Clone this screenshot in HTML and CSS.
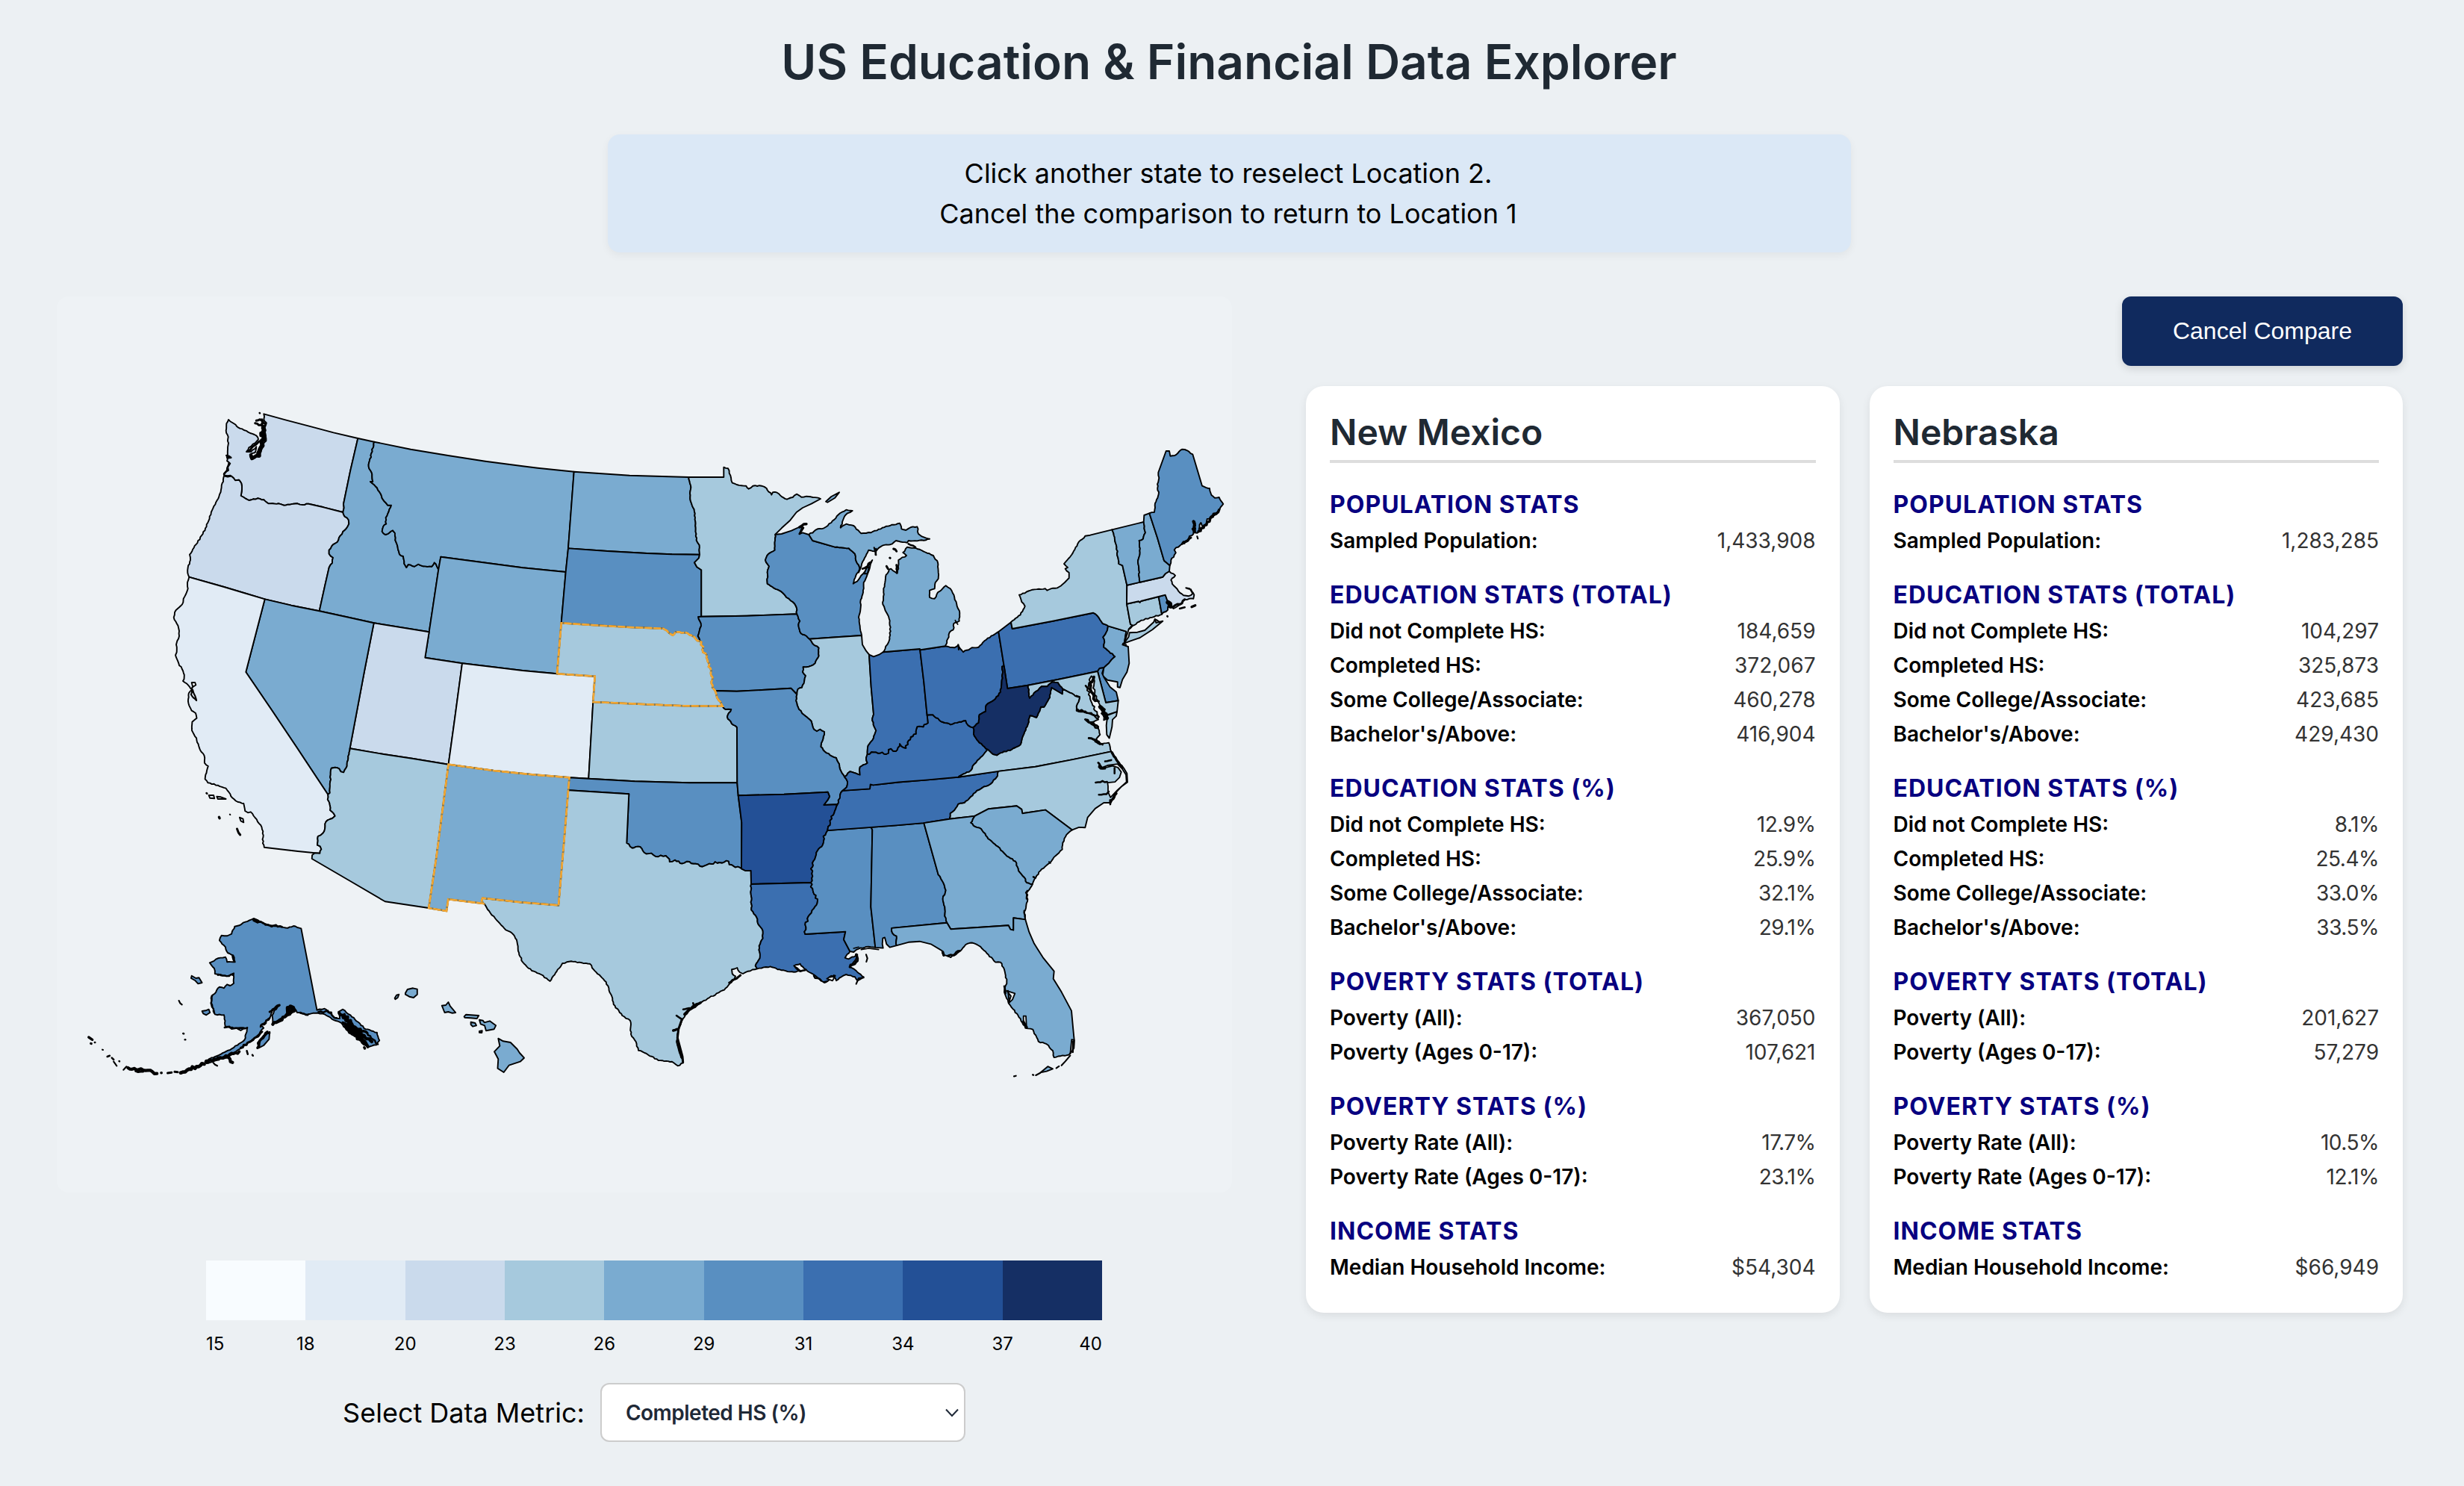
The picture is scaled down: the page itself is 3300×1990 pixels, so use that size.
FILE: index.html
```html
<!DOCTYPE html>
<html lang="en">
<head>
<meta charset="utf-8">
<title>US Education &amp; Financial Data Explorer</title>
<link rel="stylesheet" href="styles.css">
</head>
<body>
<main class="page">
  <h1 class="title">US Education &amp; Financial Data Explorer</h1>
  <div class="banner">
    <p>Click another state to reselect Location 2.</p>
    <p>Cancel the comparison to return to Location 1</p>
  </div>
  <div class="columns">
    <section class="explorer">
      <svg class="map" id="map" viewBox="76 397 1574 1200" role="img" aria-label="US states map"></svg>
      <div class="legend">
        <div class="swatches">
          <span class="c1"></span><span class="c2"></span><span class="c3"></span><span class="c4"></span><span class="c5"></span><span class="c6"></span><span class="c7"></span><span class="c8"></span><span class="c9"></span>
        </div>
        <div class="ticks">
          <span class="edge">15</span><span>18</span><span>20</span><span>23</span><span>26</span><span>29</span><span>31</span><span>34</span><span>37</span><span class="edge">40</span>
        </div>
      </div>
      <div class="metric">
        <span class="metric-label">Select Data Metric:</span>
        <div class="select">
          <span>Completed HS (%)</span>
          <svg class="chevron" width="20" height="12" viewBox="0 0 20 12"><path d="M2 1.5 L10 10 L18 1.5"/></svg>
        </div>
      </div>
    </section>
    <section class="compare">
      <button class="cancel" type="button">Cancel Compare</button>
      <div class="cards">
        <article class="card">
          <h2>New Mexico</h2>
          <h3>Population Stats</h3>
          <div class="row"><b>Sampled Population:</b><span>1,433,908</span></div>
          <h3>Education Stats (Total)</h3>
          <div class="row"><b>Did not Complete HS:</b><span>184,659</span></div>
          <div class="row"><b>Completed HS:</b><span>372,067</span></div>
          <div class="row"><b>Some College/Associate:</b><span>460,278</span></div>
          <div class="row"><b>Bachelor's/Above:</b><span>416,904</span></div>
          <h3>Education Stats (%)</h3>
          <div class="row pct"><b>Did not Complete HS:</b><span>12.9%</span></div>
          <div class="row pct"><b>Completed HS:</b><span>25.9%</span></div>
          <div class="row pct"><b>Some College/Associate:</b><span>32.1%</span></div>
          <div class="row pct"><b>Bachelor's/Above:</b><span>29.1%</span></div>
          <h3>Poverty Stats (Total)</h3>
          <div class="row"><b>Poverty (All):</b><span>367,050</span></div>
          <div class="row"><b>Poverty (Ages 0-17):</b><span>107,621</span></div>
          <h3>Poverty Stats (%)</h3>
          <div class="row pct"><b>Poverty Rate (All):</b><span>17.7%</span></div>
          <div class="row pct"><b>Poverty Rate (Ages 0-17):</b><span>23.1%</span></div>
          <h3>Income Stats</h3>
          <div class="row"><b>Median Household Income:</b><span>$54,304</span></div>
        </article>
        <article class="card">
          <h2>Nebraska</h2>
          <h3>Population Stats</h3>
          <div class="row"><b>Sampled Population:</b><span>1,283,285</span></div>
          <h3>Education Stats (Total)</h3>
          <div class="row"><b>Did not Complete HS:</b><span>104,297</span></div>
          <div class="row"><b>Completed HS:</b><span>325,873</span></div>
          <div class="row"><b>Some College/Associate:</b><span>423,685</span></div>
          <div class="row"><b>Bachelor's/Above:</b><span>429,430</span></div>
          <h3>Education Stats (%)</h3>
          <div class="row pct"><b>Did not Complete HS:</b><span>8.1%</span></div>
          <div class="row pct"><b>Completed HS:</b><span>25.4%</span></div>
          <div class="row pct"><b>Some College/Associate:</b><span>33.0%</span></div>
          <div class="row pct"><b>Bachelor's/Above:</b><span>33.5%</span></div>
          <h3>Poverty Stats (Total)</h3>
          <div class="row"><b>Poverty (All):</b><span>201,627</span></div>
          <div class="row"><b>Poverty (Ages 0-17):</b><span>57,279</span></div>
          <h3>Poverty Stats (%)</h3>
          <div class="row pct"><b>Poverty Rate (All):</b><span>10.5%</span></div>
          <div class="row pct"><b>Poverty Rate (Ages 0-17):</b><span>12.1%</span></div>
          <h3>Income Stats</h3>
          <div class="row"><b>Median Household Income:</b><span>$66,949</span></div>
        </article>
      </div>
    </section>
  </div>
</main>
<script src="map.js"></script>
</body>
</html>
```

FILE: styles.css
```css
* { box-sizing: border-box; margin: 0; padding: 0; }

body {
  background: #ecf0f3;
  color: #000;
  font-family: Inter, "Liberation Sans", sans-serif;
}

.page {
  width: 3300px;
  height: 1990px;
  padding: 44px 84px 0 76px;
  display: flex;
  flex-direction: column;
  align-items: center;
  overflow: hidden;
}

.title {
  font-size: 64px;
  font-weight: 600;
  line-height: 78px;
  color: #1f2933;
}

.banner {
  width: 1665px;
  height: 158px;
  margin-top: 58px;
  padding: 25px 26px 25px 24px;
  border-radius: 16px;
  background: #dbe8f6;
  box-shadow: 0 4px 12px rgba(0, 0, 0, 0.05);
  text-align: center;
  font-size: 36px;
  line-height: 54px;
}

.columns {
  width: 3142px;
  align-self: flex-start;
  margin-top: 59px;
  display: flex;
  justify-content: space-between;
}

.explorer {
  width: 1600px;
  display: flex;
  flex-direction: column;
  align-items: center;
}

.map {
  width: 1574px;
  height: 1200px;
  align-self: flex-start;
  background: #eef2f5;
  border-radius: 16px;
}

.state { stroke: #000; stroke-width: 1.9; stroke-linejoin: round; }
.picked-base { fill: none; stroke: #94804f; stroke-width: 2.6; }
.picked { fill: none; stroke: #f3a733; stroke-width: 2.6; stroke-dasharray: 10 2; }
.ink { fill: none; stroke: #000; stroke-linejoin: round; stroke-linecap: round; }
.water { fill: #eef2f5; stroke: #000; stroke-width: 1.8; stroke-linejoin: round; }

.c1 { background: #f8fcff; fill: #f8fcff; }
.c2 { background: #e1ebf5; fill: #e1ebf5; }
.c3 { background: #cadaec; fill: #cadaec; }
.c4 { background: #a6c9dd; fill: #a6c9dd; }
.c5 { background: #7aabd0; fill: #7aabd0; }
.c6 { background: #598fc1; fill: #598fc1; }
.c7 { background: #3b6fb0; fill: #3b6fb0; }
.c8 { background: #235096; fill: #235096; }
.c9 { background: #152f64; fill: #152f64; }

.legend { width: 1200px; margin-top: 91px; }

.swatches { display: flex; height: 80px; }
.swatches span { flex: 1; }

.ticks {
  display: flex;
  margin-top: 17px;
  font-size: 24px;
  line-height: 30px;
}
.ticks span { flex: 2 1 0; text-align: center; }
.ticks .edge { flex: 1 1 0; text-align: left; }
.ticks .edge:last-child { text-align: right; }

.metric {
  display: flex;
  align-items: center;
  gap: 21px;
  margin-top: 37px;
}

.metric-label { font-size: 36px; line-height: 44px; }

.select {
  width: 489px;
  height: 79px;
  padding: 0 6px 0 32px;
  display: flex;
  align-items: center;
  justify-content: space-between;
  border: 2px solid #ccc;
  border-radius: 12px;
  background: #fff;
  color: #1f2937;
  font-size: 28px;
  font-weight: 600;
  letter-spacing: -0.5px;
}

.chevron path { fill: none; stroke: #1f2937; stroke-width: 2; }

.compare {
  width: 1469px;
  display: flex;
  flex-direction: column;
  align-items: flex-end;
  gap: 27px;
}

.cancel {
  width: 376px;
  height: 93px;
  border: 0;
  border-radius: 12px;
  background: #102a5e;
  color: #fff;
  font: 32px "Liberation Sans", Arial, sans-serif;
  box-shadow: 0 4px 12px rgba(0, 0, 0, 0.12);
}

.cards { width: 100%; display: flex; gap: 40px; }

.card {
  flex: 1;
  height: 1241px;
  padding: 33px 32px 32px;
  border-radius: 24px;
  background: #fff;
  box-shadow: 0 4px 12px rgba(0, 0, 0, 0.08);
}

.card h2 {
  padding-bottom: 8px;
  margin-bottom: 36px;
  border-bottom: 4px solid #ddd;
  font-size: 48px;
  font-weight: 600;
  line-height: 58px;
  color: #1f2933;
}

.card h3 {
  margin: 30px 0 5px;
  font-size: 32px;
  font-weight: 700;
  line-height: 40px;
  letter-spacing: 1px;
  text-transform: uppercase;
  color: #080080;
}

.card h2 + h3 { margin-top: 0; }

.row {
  display: flex;
  justify-content: space-between;
  font-size: 28px;
  line-height: 46px;
}
.row b { font-weight: 600; }
.row span { color: #333; }
.pct span { letter-spacing: -0.5px; }
```

FILE: map.js
```js
// Quantised map tiles: origin x, origin y, x scale, y scale.
const T = 1 / 3;
const tiles = {
  A: [200, 530, T, T], B: [700, 600, T, T], C: [1150, 580, T, T],
  D: [200, 900, 600 / 1568, T], E: [750, 950, T, T],
  F: [1100, 900, T, 560 / 1568], G: [100, 1200, 640 / 1568, T]
};

// Shared borders. A leading "~" marks a natural (irregular) line, "~~" a strongly winding one.
const arcs = {
  waN: "A 460,73 550,98 650,124 740,148 838,171",
  waCoast: "~A 460,73 460,95 470,108 462,130 468,160 465,185 455,200 445,240 430,245 415,255 405,245 410,232 425,228 430,205 408,225 390,225 400,208 425,190 438,175 430,160 405,150 380,138 358,128 340,112 318,96 310,112 308,140 317,165 315,215 312,262 325,272 315,285 318,300 300,312 301,320",
  orN: "~A 301,320 330,323 345,340 360,338 370,352 372,375 368,402 385,412 400,420 435,412 460,418 478,433 520,433 540,440 595,433 615,438 640,434 | A 700,448 778,468",
  waID: "A 838,171 808,300 780,435 782,450 778,468",
  idN: "A 838,171 903,185",
  orID: "~A 778,468 785,485 800,498 802,515 785,540 762,570 755,588 738,598 722,620 722,635 738,650 735,672 722,690 | A 705,765 683,865",
  orCoast: "~A 301,320 297,345 290,360 288,378 272,420 252,460 235,510 215,555 188,597 162,638 165,660 155,690 154,712 160,728",
  orCA: "A 160,728 300,768 380,792 464,817",
  orNV: "A 464,817 570,842 683,865",
  idNV: "A 683,865 790,888 902,913",
  idUT: "A 902,913 1124,949",
  mtID: "~A 903,185 881,285 895,315 898,345 888,345 915,370 930,395 935,412 950,430 958,440 972,440 962,465 950,490 952,515 940,525 935,545 948,558 965,550 978,541 987,552 988,580 996,600 1002,625 1005,637 1020,645 1024,675 1033,690 1040,678 1065,686 1080,677 1100,685 1135,686 1145,670 1155,685 1162,698",
  mtN: "A 903,185 1050,215 1200,240 1350,263 1500,283 | B 60,80 206,95",
  mtWYw: "A 1162,698 1171,647",
  idWY: "A 1162,698 1124,949",
  mtWYs: "A 1171,647 1330,668 1500,691 | B 90,490 173,498",
  mtND: "B 206,95 183,403",
  mtSD: "B 183,403 173,498",
  wySD: "B 173,498 155,703",
  wyNE: "B 155,703 138,907",
  wyUT: "A 1124,949 1108,1052 1257,1075",
  wyCO: "A 1257,1075 1370,1088 1500,1104 | B 138,907",
  utCO: "A 1257,1075 | D 1070,180 1047,371",
  caNV: "A 464,817 388,1110 | D 430,155 520,310 625,492",
  nvUT: "A 902,913 | D 752,0 702,307",
  nvAZ: "~D 702,307 689,385 680,403 670,400 664,388 650,383 637,386 633,440 632,485 625,492",
  utAZ: "D 702,307 820,330 920,347 1047,371",
  caAZ: "~D 625,492 624,512 632,535 633,555 650,578 640,588 624,595 615,610 612,640 600,655 590,660 588,695 598,700 602,712 597,728 | D 580,727",
  caS: "D 580,727 520,720 402,704",
  caCoast: "~A 160,728 153,750 155,775 148,795 137,815 136,830 120,850 102,870 98,890 110,915 118,935 120,965 112,985 108,1000 110,1030 105,1042 118,1075 135,1105 140,1130 135,1146 | ~D 140,58 150,70 138,85 137,125 148,155 162,165 166,185 150,200 149,235 165,265 175,305 192,335 193,365 206,378 200,405 195,430 205,445 240,455 268,467 283,490 290,505 310,522 330,528 335,558 345,565 355,562 370,585 390,615 398,640 397,688 402,704",
  azS: "D 580,727 570,735 569,750 700,838 825,922 978,948",
  azNM: "D 1047,371 1030,520 1005,740 978,948",
  coNM: "D 1047,371 1205,396 1340,412 1470,424",
  nmOK: "D 1470,424 1466,476",
  nmTX: "D 1466,476 1450,700 1432,937 1300,925 1166,908 1163,918 1169,930",
  nmS: "D 978,948 1040,960 1046,913 1169,930",
  coOK: "D 1470,424 | E 115,278",
  coKS: "B 283,1020 | E 131,0 115,278",
  coNE: "B 138,907 290,917 283,1020",
  neSD: "B 155,703 290,712 430,720 565,725 | ~B 585,740 603,752 613,740 655,741 670,750 690,760 702,774 718,780",
  ndSD: "B 183,403 340,414 500,423 600,427 711,428",
  ndMN: "~B 667,117 675,150 673,205 690,255 695,320 698,370 710,390 711,428",
  ndN: "B 206,95 430,110 667,117",
  mnN: "B 667,117 808,117 808,77 | ~B 825,82 835,110 842,140 860,147 898,152 908,164 925,152 960,152 980,162 1000,188 1005,178 1022,179 1035,190 1062,206 1085,198 1102,185 1120,197 1150,195 1197,204",
  mnLake: "B 1197,204 1160,224 1125,240 1100,258 1075,290 1040,322 1015,347",
  mnWI: "~B 1015,347 1013,410 988,425 975,450 990,475 983,500 983,545 1010,563 1045,582 1060,600 1085,618 1098,635 1102,667",
  mnIA: "B 718,677 900,674 1102,667",
  mnSD: "B 711,428 708,442 690,460 700,478 718,490 718,677",
  sdIA: "~B 718,677 706,678 712,695 717,715 710,735 704,755 718,780",
  neIA: "~~B 718,780 722,810 735,825 742,850 747,878 757,895 762,930 762,962 773,975",
  neMO: "~B 773,975 780,1000 795,1020 803,1037",
  neKS: "B 283,1020 500,1030 650,1036 803,1037",
  iaMO: "B 773,975 860,977 1000,970 1078,965 1102,990",
  iaWI: "~B 1102,667 1114,695 1108,710 1118,745 1140,755 1153,767",
  iaIL: "~B 1153,767 1165,785 1190,803 1190,835 1175,865 1150,878 1127,880 1125,900 1137,915 1130,945 1122,962 1106,968 1102,990",
  wiIL: "B 1153,767 1260,760 1362,753",
  wiMI: "B 1150,348 1165,372 1255,398 | ~B 1310,403 1335,425 1340,455 1350,470 1355,488",
  wiSup: "B 1015,347 1040,345 1080,332 1110,318 1125,312 1112,345 1125,340 1150,348",
  wiLake: "~B 1355,488 1342,505 1328,545 1345,535 1360,512 1372,500 1385,480 1405,450 1388,500 1370,540 1368,580 1358,610 1358,640 1350,680 1355,715 1362,753",
  ilLake: "B 1362,753 1365,790 1380,815 1392,830",
  inLake: "B 1392,830 1410,838 1432,830 | C 98,880",
  miIN: "C 98,880 246,867",
  miOH: "C 246,867 249,871 347,856",
  inOH: "C 246,867 262,1000 275,1135 | F 425,161",
  miLow: "~C 98,880 122,835 128,780 122,745 97,688 100,640 108,578 122,548 130,545 150,560 160,545 160,510 192,492 178,480 195,458 230,462 275,482 300,492 318,520 320,585 308,600 305,625 285,632 285,660 305,665 318,640 350,613 368,625 385,660 395,695 405,715 404,755 382,765 380,790 365,800 362,820 347,856",
  miUp: "~B 1150,348 1185,325 1210,322 1240,300 1275,262 1300,248 1325,252 1305,262 1290,282 1277,320 1300,305 1330,312 1360,343 | ~C 20,402 50,400 95,380 165,362 172,385 190,390 210,378 235,376 240,405 262,418 285,425 270,430 200,432 195,440 150,432 135,445 95,452 65,475 40,470 20,510 0,560 | B 1355,488",
  ilIN: "B 1392,830 1400,960 1410,1070 | ~B 1405,1095 1420,1135 1410,1165 1388,1195 | ~E 1238,145 1235,180",
  inKY: "~~E 1235,180 1270,172 1310,180 1330,158 1350,168 1365,138 1390,155 1400,125 1430,98 1435,70 1460,70 1478,55 | F 425,161",
  ohKY: "~F 425,161 448,160 480,185 520,197 545,190 580,182 590,200 610,208",
  ohWV: "~F 610,208 632,190 635,160 660,148 662,125 700,100 720,75 725,30 | ~C 580,960 576,938 584,936",
  ohPA: "C 562,798 584,936",
  paWV: "C 584,936 598,1026 680,1013",
  paMD: "C 680,1013 800,990 960,957",
  paDE: "C 960,957 968,945 985,943",
  paNJ: "~C 985,943 1005,925 1030,898 1000,872 985,860 988,840 982,820 995,800 1002,775",
  paNY: "C 617,786 780,755 942,722 | ~C 960,735 970,750 980,765 1002,775",
  paLake: "C 562,798 612,760",
  paNYw: "C 612,760 617,786",
  ohLake: "~C 347,856 385,862 400,852 420,880 455,862 482,860 505,835 562,798",
  nyLake: "~C 612,760 650,730 668,695 655,678 645,650 690,632 750,625 757,632 805,618 845,583 845,560 830,545 840,540 825,525 855,490 880,445 910,413",
  nyCan: "C 910,413 930,410 1018,388",
  nyVT: "~C 1018,388 1035,450 1045,525 | C 1060,532 1078,611",
  nyMA: "C 1078,611 1077,686",
  nyCT: "C 1077,686 1092,768 1100,772 1085,788",
  nyNJ: "C 1002,775 1075,797 1068,840",
  nyCoast: "C 1085,788 1080,805 1068,840",
  njCoast: "C 1068,840 1060,850 1083,858 1087,925 1078,960 1060,990 1050,1022 1040,1020 1040,1000 1000,992 980,975 985,943",
  ctCoast: "~C 1085,788 1135,752 1180,740 1218,728",
  ctMA: "C 1077,686 1125,676 1130,680 1134,675 1205,657",
  ctRI: "C 1205,657 1218,728",
  riMA: "C 1205,657 1232,650 1243,680 1250,695",
  riCoast: "~~C 1218,728 1242,710 1245,690 1250,695",
  vtCan: "C 1018,388 1145,357",
  vtNH: "~C 1145,357 1152,400 1143,425 1127,432 1130,480 1122,520 1130,599",
  vtMA: "C 1078,611 1130,599",
  nhMA: "C 1130,599 1222,578 1232,565 1248,555",
  nhCan: "C 1145,357 1147,330 1168,322",
  nhME: "C 1168,322 1200,420 1227,512 1250,532",
  nhCoast: "C 1250,532 1248,555",
  meN: "~C 1168,322 1188,318 1190,290 1205,245 1200,205 1207,180 1204,158 | C 1235,72 | ~C 1248,72 1252,92 1270,90 1300,65 1320,70 1342,85 | C 1380,212 | ~C 1410,222 1418,250 1430,260 1448,258 1465,285",
  meCoast: "~~C 1465,285 1450,308 1430,330 1400,345 1388,380 1375,360 1368,395 1350,400 1350,355 1340,385 1345,405 1320,430 1300,445 1275,460 1268,490 1255,510 1250,532",
  maCoast: "~C 1248,555 1272,572 1255,590 1265,612 1285,635 1305,652 1325,655 1342,645 1330,625 1315,622 1335,628 1348,650 1345,665 1310,668 1290,690 1265,705 1250,695",
  deCoast: "C 985,943 978,965 985,980 1010,1020 1035,1040 1043,1075",
  deMD: "C 1043,1075 993,1083 960,957",
  mdCoast: "C 1043,1075 1038,1120 | F 1188,149",
  mdVAe: "F 1188,149 1150,160",
  mdBay: "~~F 1150,160 1135,180 1125,155 1140,140 1120,125 1105,100 1092,60 1095,25 1085,15 1070,60 1080,100 1090,125 1100,145 1112,165 1112,178",
  mdVA: "~F 1112,178 1095,160 1060,152 1025,145 1028,120 1038,95 1020,90 1000,78 | C 820,1028",
  mdWV: "~C 680,1013 687,1065 712,1038 735,1018 758,1018 778,1000 800,1002 820,1028",
  vaWV: "C 820,1028 818,1048 775,1022 | ~C 768,1062 745,1100 732,1100 715,1142 688,1135 | ~F 830,195 810,240 800,272 765,290 720,303 705,312 690,308 668,290",
  kyWV: "~F 610,208 615,240 635,265 668,290",
  kyVA: "~F 668,290 640,320 615,345 600,370 550,394",
  tnVA: "F 550,394 711,372",
  kyTN: "F 550,394 420,405 310,413 208,424 197,421 195,438 85,445",
  vaNC: "F 711,372 860,355 1010,328 1165,298",
  vaCoast: "~F 1112,178 1085,188 1112,205 1120,235 1105,250 1120,268 1155,265 1165,298",
  ncCoast: "F 1165,298 1190,335 1215,360 1228,380 1230,413 1205,430 1180,455 1162,490 1135,490 1100,512 1070,545 1060,583 1035,582 1008,592",
  ncSC: "F 1008,592 900,517 808,530 805,515 785,502 672,513 616,540",
  ncGA: "F 616,540 515,551",
  ncTN: "~F 515,551 518,530 535,518 550,495 575,490 600,468 625,445 645,435 680,420 700,400 708,390 711,372",
  gaSC: "~F 616,540 600,565 618,580 642,588 670,625 710,655 740,685 780,710 792,745 815,770 825,790 848,796",
  scCoast: "~F 1008,592 985,610 970,640 968,665 940,690 918,715 880,745 862,770 848,796",
  gaCoast: "~F 848,796 825,828 828,860 815,900 820,928",
  gaFL: "F 820,928 772,922 772,968 760,965 752,950 640,957 520,964 505,940",
  alGA: "F 412,566 440,660 470,760 | ~F 490,790 500,818 488,850 496,880 496,915 505,940",
  alFL: "F 505,940 283,960 | ~F 285,978 302,990 300,1020 303,1025",
  tnGA: "F 515,551 412,566",
  tnAL: "F 412,566 300,575 200,582",
  tnMS: "F 200,582 25,594",
  flCoast: "F 820,928 835,975 855,1018 890,1070 935,1122 932,1150 965,1200 1005,1270 1012,1340 1016,1380 1015,1410 995,1435 | ~F 960,1440 935,1445 930,1420 905,1395 872,1385 850,1340 820,1335 800,1300 755,1245 735,1200 745,1160 735,1115 720,1088 700,1088 665,1055 640,1030 605,1015 580,1022 555,1048 520,1070 490,1062 485,1045 | F 440,1020 395,1010 350,1013 303,1025",
  alCoast: "F 303,1025 275,1032 262,1020 255,995 247,998 245,1020 248,1035 217,1033",
  msAL: "F 200,582 205,592 199,880 217,1033",
  msCoast: "~F 217,1033 180,1030 150,1038 130,1050 | E 1165,972",
  msLA: "E 985,903 1147,893 1140,925 1165,972",
  laMS: "~~E 1008,696 1018,735 1035,762 1020,800 1003,825 985,865 985,903",
  arMS: "~~E 1075,487 1058,510 1055,545 1030,575 1018,610 1008,640 1015,670 1008,696",
  arTN: "~~E 1115,382 1108,400 1090,430 1085,465 1075,487",
  moTN: "~~E 1135,327 1125,345 1118,365 1115,382",
  moKY: "~E 1143,271 1155,290 1152,312 1135,327",
  moIL: "~B 1102,990 1098,1015 1110,1050 1130,1072 1160,1098 1170,1130 1182,1138 1195,1130 1212,1140 1208,1160 1200,1185 | ~E 1048,150 1070,175 1110,195 1122,220 1125,240 1143,271",
  ilKY: "~E 1143,271 1165,250 1205,263 1205,232 1235,215 1230,195 1235,180",
  moAR: "E 716,346 900,341 1076,332 1083,350 1075,365 1060,384 1115,382",
  moOK: "E 712,295 716,346",
  moKS: "~B 803,1037 815,1050 838,1050 822,1080 840,1108 861,1122 | E 712,295",
  ksOK: "E 115,278 300,289 520,295 712,295",
  okAR: "E 716,346 730,455 729,640",
  okTX: "E 36,325 277,340 268,537 | ~~E 290,557 322,552 338,575 375,585 395,592 425,588 440,612 462,605 490,620 520,612 545,620 572,632 600,620 640,615 668,608 690,625 729,640",
  arTX: "E 729,640 745,648 767,648 768,702",
  arLA: "E 768,702 1008,696",
  txLA: "~E 768,702 769,806 790,835 795,860 815,890 815,920 800,950 803,1000 785,1030 792,1042",
  laCoast: "~E 792,1042 845,1033 890,1048 940,1055 965,1050 940,1030 965,1022 980,1040 1010,1060 1035,1078 1062,1098 1085,1085 1100,1068 1110,1090 1130,1075 1150,1065 1185,1075 1195,1090 1220,1075 1190,1050 1165,1035 1190,1000 1195,985 1160,1003 1145,998 1165,972",
  txCoast: "~E 792,1042 755,1052 735,1062 722,1056 712,1038 690,1045 692,1062 705,1072 700,1085 660,1127 600,1158 550,1190 515,1215 490,1250 475,1290 470,1330 480,1375 495,1420 473,1432 450,1415 395,1410 340,1380 315,1370 305,1335 285,1305 282,1250 250,1230 215,1185 205,1145 185,1095 135,1045 120,1022 45,1012 10,1020 | ~G 1560,342 1530,315 1500,300 1470,265 1455,220 1450,175 1440,155 1410,130 1380,90 1360,60 1345,32 | D 1169,930",
  ak: "~G 743,130 718,120 700,128 670,122 635,118 605,100 587,90 560,104 540,118 525,122 515,152 500,160 482,158 475,178 495,205 502,228 520,238 526,265 500,265 495,245 470,250 443,268 458,290 460,312 498,322 522,310 522,350 510,360 500,355 490,370 475,365 450,405 447,430 460,475 490,478 495,525 530,530 545,540 567,528 557,578 510,618 480,635 430,660 432,672 460,662 500,648 545,612 600,560 620,530 610,520 640,490 648,455 672,440 655,460 648,480 650,510 690,485 700,455 720,450 730,468 765,475 790,470 820,475 845,495 875,510 900,550 940,575 960,605 990,598 1000,580 992,548 955,535 905,478 880,455 865,465 870,492 855,490 820,452 795,458 | G 743,130"
};

const states = {
  WA: [3, "waCoast orN waID waN"], OR: [3, "orCoast orCA orNV orID orN"],
  ID: [5, "idN waID orID idNV idUT idWY mtID"], MT: [5, "mtN mtND mtSD mtWYs mtWYw mtID"],
  WY: [5, "mtWYs wySD wyNE wyCO wyUT idWY mtWYw"], UT: [3, "idUT wyUT utCO utAZ nvUT"],
  NV: [5, "orNV idNV nvUT nvAZ caNV"], CA: [2, "caCoast caS caAZ caNV orCA"],
  AZ: [4, "utAZ azNM azS caAZ nvAZ"], CO: [2, "wyCO coNE coKS coOK coNM utCO"],
  ND: [5, "ndN ndMN ndSD mtND"], SD: [6, "ndSD mnSD sdIA neSD wySD mtSD"],
  KS: [4, "coKS neKS moKS ksOK"], OK: [6, "ksOK moOK okAR okTX nmOK coOK"],
  TX: [4, "okTX arTX txLA txCoast nmTX"], MN: [4, "mnN mnLake mnWI mnIA mnSD ndMN"],
  IA: [6, "mnIA iaWI iaIL iaMO neIA sdIA"], WI: [6, "mnWI wiSup wiMI wiLake wiIL iaWI"],
  IL: [4, "wiIL ilLake ilIN ilKY moIL iaIL"], MO: [6, "iaMO moIL moKY moTN moAR moOK moKS neMO"],
  AR: [8, "moAR arTN arMS arLA arTX okAR"], LA: [7, "arLA laMS msLA laCoast txLA"],
  MS: [6, "tnMS msAL msCoast msLA laMS arMS"], AL: [6, "tnAL alGA alFL alCoast msAL"],
  TN: [7, "kyTN tnVA ncTN tnGA tnAL tnMS arTN moTN"], KY: [7, "inKY ohKY kyWV kyVA kyTN moKY ilKY"],
  IN: [7, "inLake miIN inOH inKY ilIN"], OH: [7, "miOH ohLake ohPA ohWV ohKY inOH"],
  MI: [5, "miIN miOH miLow"], MIU: [5, "miUp wiMI"],
  PA: [7, "paLake paNYw paNY paNJ paDE paMD paWV ohPA"], NJ: [5, "nyNJ njCoast paNJ"],
  NY: [4, "paNYw nyLake nyCan nyVT nyMA nyCT nyCoast nyNJ paNY"], CT: [4, "ctMA ctRI ctCoast nyCT"],
  RI: [6, "riMA riCoast ctRI"], MA: [3, "vtMA nhMA maCoast riMA ctMA nyMA"],
  VT: [5, "vtCan vtNH vtMA nyVT"], NH: [5, "nhCan nhME nhCoast nhMA vtNH"],
  ME: [6, "meN meCoast nhME"], DE: [6, "deCoast deMD paDE"],
  MD: [4, "paMD deMD mdCoast mdVAe mdBay mdVA mdWV"], VA: [4, "mdVA vaCoast vaNC tnVA kyVA vaWV"],
  WV: [9, "ohWV paWV mdWV vaWV kyWV"], NC: [4, "vaNC ncCoast ncSC ncGA ncTN"],
  SC: [5, "ncSC scCoast gaSC"], GA: [5, "ncGA gaSC gaCoast gaFL alGA tnGA"],
  FL: [5, "gaFL flCoast alFL"], AK: [6, "ak"],
  NE: [4, "wyNE neSD neIA neMO neKS coNE"], NM: [5, "coNM nmOK nmTX nmS azNM"]
};

// Separate islands and peninsulas: fill class, ring.
const islands = [
  [5, "G 1085,390 1092,375 1110,370 1124,374 1124,395 1112,408 1098,404 1085,395"],
  [5, "G 1050,410 1056,398 1064,395 1060,408 1052,415"],
  [5, "G 1205,440 1218,438 1226,426 1232,442 1250,468 1238,470 1226,465 1214,468"],
  [5, "G 1278,484 1284,476 1326,480 1320,492 1300,490 1280,488"],
  [5, "G 1300,506 1314,510 1318,520 1306,524 1300,516"],
  [5, "G 1328,497 1340,500 1344,508 1362,502 1382,520 1376,535 1350,541 1345,520 1332,514"],
  [5, "G 1328,543 1337,541 1336,549 1328,548"],
  [5, "G 1390,572 1406,583 1430,588 1452,615 1460,630 1475,650 1462,665 1425,680 1408,708 1388,692 1390,655 1377,625 1395,602"],
  [6, "G 384,320 398,330 408,328 418,348 405,352 396,340 382,330"],
  [6, "G 418,462 430,460 440,455 444,468 432,478 422,472"],
  [6, "G 600,590 620,560 640,545 638,575 620,600 604,610"],
  [5, "B 1218,215 1240,195 1272,178 1255,200 1225,218"],
  [6, "B 1372,505 1382,482 1392,478 1385,505"],
  [4, "C 1066,845 1085,818 1088,802 1120,800 1150,792 1185,760 1190,748 1195,762 1222,755 1180,790 1130,822 1090,836"],
  [4, "F 1188,149 1150,162 1145,200 1147,235 1157,248 1168,205 1170,178 1185,165"],
  [5, "F 880,1502 910,1479 930,1488 905,1497"],
  [2, "D 208,495 225,495 228,508 212,506"], [2, "D 236,500 250,502 268,510 240,510"],
  [2, "D 316,584 328,590 330,604 320,598"]
];

const water = [
  "F 1190,345 1150,350 1128,358 1115,340 1125,362 1170,352 1192,358 1205,375 1198,395 1180,412 1150,415 1152,428 1152,450 1162,470 1190,442 1226,412 1224,385 1208,362",
  "F 1000,1432 1006,1378 1016,1380 1014,1410",
  "F 745,1195 778,1205 768,1228 752,1242 762,1215",
  "F 812,1290 822,1290 824,1325 812,1315",
  "E 468,1335 472,1320 478,1355 490,1400 480,1380",
  "E 1072,1082 1090,1070 1102,1078 1095,1090",
  "D 148,42 160,42 163,52 152,60"
];

// Fine coastal detail drawn as heavy line work: width, line.
const ink = [
  [7, "~~A 458,130 460,165 452,190 445,215 440,240"], [5, "~~A 448,150 466,180"], [3.5, "~~A 455,175 425,198 395,222"],
  [5.5, "~~A 440,240 412,252 408,238"], [3.5, "~~A 430,100 445,95 468,112 462,125 440,118 425,110"], [3.5, "~~A 452,95 458,130"],
  [3, "A 443,69 444,70"], [3, "~A 310,240 328,248 315,250"], [3, "~A 320,270 312,300 300,315"], [3.5, "~A 305,322 325,322"],
  [2.5, "~D 150,62 146,90 160,108 165,114 152,72"],
  [3, "D 200,486 202,488"], [4, "D 244,583 246,587"], [2.5, "D 282,572 283,573"], [3.5, "D 307,630 312,645 318,654"],
  [4, "~~B 1112,318 1140,305"], [3, "B 1112,345 1128,320"], [3, "~~B 1365,485 1395,460"], [3, "~B 1420,405 1418,428"],
  [3, "B 1475,441 1477,442"], [3.5, "~~C 140,465 152,475"], [3, "C 125,501 127,502"], [3.5, "~C 112,535 118,545"], [3.5, "~C 152,530 154,562"],
  [3, "~C 200,445 228,458"], [2.5, "~C 62,460 70,490"], [2.5, "C 400,850 402,870"], [2, "~C 388,752 398,768"],
  [4.5, "~~C 1345,355 1350,395"], [4, "~~C 1365,395 1388,372 1412,345"], [4, "~~C 1415,340 1448,308"], [3.5, "~~C 1300,445 1335,420"], [2.5, "C 1360,415 1363,424"],
  [7, "~~C 1243,680 1252,695"], [3.5, "~~C 1255,700 1290,688 1310,668"], [3, "C 1290,705 1310,700"], [4, "C 1338,698 1352,692"], [3, "C 1240,735 1241,737"],
  [2.5, "~C 1190,748 1210,760"], [2, "~C 1062,845 1075,850"],
  [4.5, "~~C 945,980 928,1005 935,1040 950,1075"], [3, "~C 912,1015 928,1030"], [3, "~C 950,1075 965,1078"],
  [6, "~~C 970,1100 985,1125 998,1145"], [3, "~~C 880,1110 925,1125 965,1140"], [3, "~~C 910,1150 960,1185"], [2.5, "~C 875,1055 888,1060"],
  [3, "~~F 1062,178 1112,205"], [3.5, "~~F 1075,248 1120,270"], [3, "~F 1100,260 1130,272"],
  [4, "~F 1168,302 1190,335 1210,358"], [3, "~~F 1112,340 1122,362 1140,362"], [3, "~F 1140,335 1165,330"], [3, "~F 1178,360 1178,380"],
  [3, "~~F 1102,414 1148,412"], [3, "~F 1115,460 1145,458 1155,448"], [4, "~F 1162,488 1185,455"], [3, "F 1160,480 1161,496"],
  [2.5, "~F 915,712 920,716"], [3, "~F 852,768 860,772"], [3, "~~F 828,820 825,850"], [2.5, "~F 815,895 818,920"],
  [4, "~~F 488,1050 492,1062"], [3, "~~F 508,1064 530,1062 558,1045"], [3, "~F 735,1178 740,1205"], [2.5, "~F 750,1195 755,1230"], [3.5, "~F 812,1310 826,1332"],
  [2.5, "F 1000,1438 980,1460 965,1475"], [2.5, "F 955,1478 944,1485"], [2.5, "F 880,1503 862,1512"], [3, "F 850,1510 852,1511"], [2.5, "F 774,1516 782,1514"], [3, "F 1012,1385 1010,1425"],
  [2.5, "E 1230,985 1235,1000 1231,1014"], [2, "E 1210,965 1240,960 1280,965"], [2, "E 1180,960 1200,955"],
  [4, "~~E 1190,985 1195,1010 1165,1035"], [3, "~~E 1020,1070 1050,1090"], [3, "~E 945,1035 965,1052 985,1048"], [2.5, "~E 1060,1095 1075,1092"], [2.5, "E 1190,1103 1200,1080 1220,1078"], [3, "~E 1085,1075 1105,1070"],
  [3.5, "~E 680,1098 700,1085 725,1068"], [4, "~E 500,1225 540,1190 565,1178"], [3, "~E 495,1205 520,1200"], [3, "~E 535,1180 538,1190"], [3, "~E 468,1230 490,1245"], [4, "~E 455,1290 470,1285"],
  [3.5, "E 490,1245 476,1285 472,1320 480,1350 492,1395 494,1418"],
  [6, "~~G 590,96 600,102"], [3, "~~G 600,105 640,118 680,124"], [3, "~G 518,238 524,262"], [3, "~~G 492,528 530,530 560,532"],
  [2.5, "~G 450,400 448,430 458,470"], [2.5, "~~G 470,318 500,322 520,318"],
  [7, "~~G 700,450 705,470 718,460 708,445"], [5, "~~G 650,515 690,485 705,475"], [3.5, "~~G 640,465 672,438"], [3, "~~G 610,525 640,490"],
  [4, "~~G 600,610 612,575 632,545"], [3, "~~G 625,560 640,550"], [3.5, "~~G 545,610 590,570 615,545"],
  [3, "~~G 740,468 765,478"], [3, "~~G 800,465 830,460 860,490"],
  [5, "~~G 868,470 890,500 920,530 950,560 975,585"], [5, "~~G 880,510 905,545 935,575 962,605"], [4, "~~G 885,475 920,525 960,550"],
  [5.5, "~~G 895,520 925,555 955,590"], [3, "~~G 960,550 985,580 995,595"], [5, "~~G 905,500 915,540 945,565"], [4, "G 950,608 952,612"],
  [5, "~~G 470,650 500,645 518,668"], [4.5, "~~G 430,665 465,655 540,625"], [3, "G 565,622 568,635"], [3, "G 583,638 585,641"], [2.5, "~G 455,670 468,682"],
  [5.5, "~~G 348,710 375,695 400,685 425,675"], [3.5, "G 305,711 318,709"], [3.5, "G 328,706 338,707"], [4, "G 284,710 285,710"],
  [5, "~~G 175,690 210,697 240,700 270,713"], [3.5, "~~G 200,703 225,705"], [2.5, "G 160,698 170,685"], [3, "G 146,663 147,664"],
  [2.5, "G 128,665 138,682"], [3, "G 122,650 128,657"], [3, "G 107,645 115,641"], [2.5, "G 91,617 93,618"], [4, "G 46,567 58,577"], [3.5, "G 53,592 55,593"], [3, "G 66,588 67,588"],
  [2.5, "G 342,420 346,430 352,436"], [3, "G 356,552 358,553"], [3, "G 362,577 363,577"]
];

let seed = 7;
const rnd = () => ((seed = (seed * 16807) % 2147483647) / 2147483647) * 2 - 1;

function roughen(pts, amp) {
  const out = [pts[0]];
  for (let i = 1; i < pts.length; i++) {
    const [x0, y0] = pts[i - 1], [x1, y1] = pts[i];
    const len = Math.hypot(x1 - x0, y1 - y0), n = Math.floor(len / 2.6);
    for (let k = 1; k < n; k++) {
      const t = k / n, d = rnd() * amp;
      out.push([x0 + (x1 - x0) * t - (y1 - y0) / len * d, y0 + (y1 - y0) * t + (x1 - x0) / len * d]);
    }
    out.push([x1, y1]);
  }
  return out;
}

function decode(text) {
  let line = [];
  for (const part of text.split("|")) {
    const words = part.trim().split(/\s+/);
    const amp = words[0].startsWith("~~") ? 1.7 : words[0].startsWith("~") ? 0.7 : 0;
    const [ox, oy, sx, sy] = tiles[words[0].replace(/~/g, "")];
    let pts = words.slice(1).map(w => {
      const [x, y] = w.split(",").map(Number);
      return [ox + x * sx, oy + y * sy];
    });
    if (line.length) pts.unshift(line[line.length - 1]);
    if (amp && pts.length > 1) pts = roughen(pts, amp);
    line = line.length ? line.concat(pts.slice(1)) : pts;
  }
  return line;
}

const decoded = {};
for (const name in arcs) decoded[name] = decode(arcs[name]);

const dist = (a, b) => Math.hypot(a[0] - b[0], a[1] - b[1]);

// Chain arcs into one ring, flipping each so that it continues from the previous one.
function ring(names) {
  const list = names.split(" ").map(n => decoded[n]);
  let line = list[0].slice();
  if (list.length > 1) {
    const gap = p => Math.min(dist(p, list[1][0]), dist(p, list[1][list[1].length - 1]));
    if (gap(line[0]) < gap(line[line.length - 1])) line.reverse();
  }
  for (const next of list.slice(1)) {
    const end = line[line.length - 1];
    line = line.concat(dist(end, next[0]) <= dist(end, next[next.length - 1]) ? next : next.slice().reverse());
  }
  return line;
}

const svg = document.getElementById("map");
function draw(pts, cls, closed, width) {
  const p = document.createElementNS("http://www.w3.org/2000/svg", "path");
  p.setAttribute("d", "M" + pts.map(q => q[0].toFixed(1) + " " + q[1].toFixed(1)).join("L") + (closed ? "Z" : ""));
  p.setAttribute("class", cls);
  if (width) p.setAttribute("stroke-width", width);
  svg.appendChild(p);
}

for (const id in states) draw(ring(states[id][1]), "state c" + states[id][0], true);
for (const [c, text] of islands) draw(decode(text), "state c" + c, true);
for (const text of water) draw(decode(text), "water", true);
for (const [w, text] of ink) draw(decode(text), "ink", false, w * 0.85);
for (const id of ["NM", "NE"]) {
  draw(ring(states[id][1]), "picked-base", true);
  draw(ring(states[id][1]), "picked", true);
}
```
